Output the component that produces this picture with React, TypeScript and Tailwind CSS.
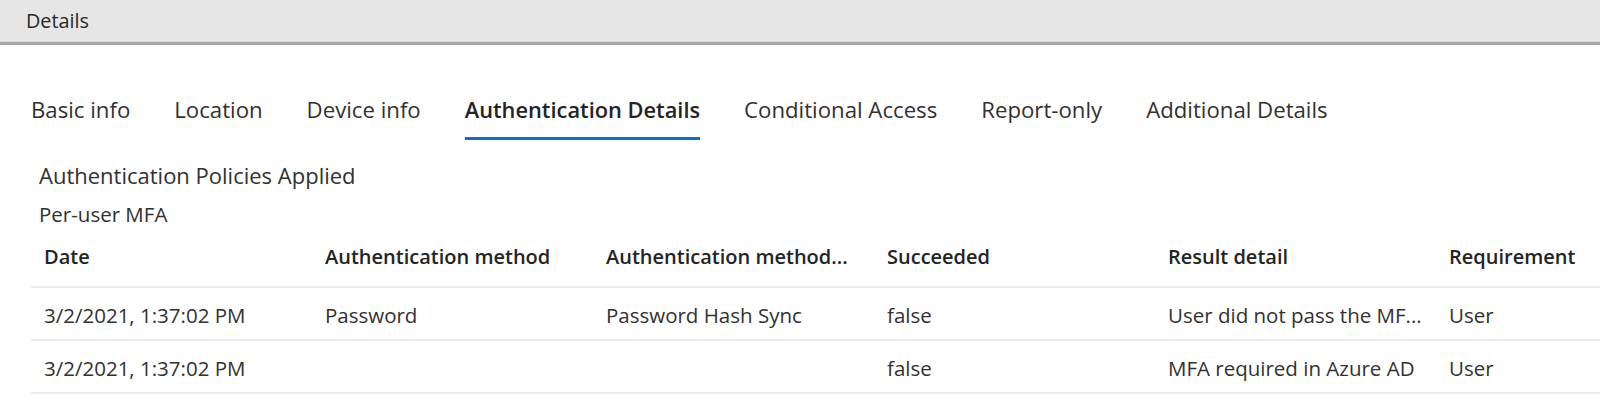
const tabs = [
  "Basic info",
  "Location",
  "Device info",
  "Authentication Details",
  "Conditional Access",
  "Report-only",
  "Additional Details",
];

const columns = [
  "Date",
  "Authentication method",
  "Authentication method...",
  "Succeeded",
  "Result detail",
  "Requirement",
];

const rows = [
  [
    "3/2/2021, 1:37:02 PM",
    "Password",
    "Password Hash Sync",
    "false",
    "User did not pass the MF...",
    "User",
  ],
  ["3/2/2021, 1:37:02 PM", "", "", "false", "MFA required in Azure AD", "User"],
];

const font = { fontFamily: '"Open Sans", "Noto Sans", sans-serif' };

export default function App() {
  return (
    <div className="h-[409px] w-[1600px] overflow-hidden bg-white text-[#323130]" style={font}>
      <div className="flex h-[41px] items-center bg-[#e6e6e6] pl-[26px] text-[19.8px] text-[#262626]">
        Details
      </div>
      <div className="h-px bg-[#d9d9d9]" />
      <div className="h-[3px] bg-[#a6a6a6]" />

      <div className="mt-[50px] flex gap-[44px] pl-[31px]">
        {tabs.map((tab) => {
          const active = tab === "Authentication Details";
          return (
            <div key={tab} className="flex flex-col">
              <span
                className={
                  active
                    ? "h-[30px] text-[21.8px] font-semibold leading-[30px] text-[#242424]"
                    : "h-[30px] text-[22.2px] leading-[30px] text-[#323130]"
                }
              >
                {tab}
              </span>
              <div className={active ? "mt-[12px] h-[3px] bg-[#0f6cd6]" : "mt-[12px] h-[3px]"} />
            </div>
          );
        })}
      </div>

      <div className="ml-[39px] mt-[20px] h-[30px] text-[22px] leading-[30px]">
        Authentication Policies Applied
      </div>
      <div className="ml-[39px] mt-[11px] h-[26px] text-[20.5px] leading-[26px]">Per-user MFA</div>

      <div className="ml-[31px] mt-[4px]">
        <div className="grid h-[57px] grid-cols-[281px_281px_281px_281px_281px_1fr] items-center border-b-2 border-[#ececec] pb-[4px] text-[20px] font-semibold text-[#242424]">
          {columns.map((c) => (
            <div key={c} className="overflow-hidden whitespace-nowrap px-[13px]">
              {c}
            </div>
          ))}
        </div>
        {rows.map((r, i) => (
          <div
            key={i}
            className="grid h-[53px] grid-cols-[281px_281px_281px_281px_281px_1fr] items-center border-b-2 border-[#ececec] pt-[3px] text-[20.5px]"
          >
            {r.map((cell, j) => (
              <div key={j} className="overflow-hidden whitespace-nowrap px-[13px]">
                {cell}
              </div>
            ))}
          </div>
        ))}
      </div>
    </div>
  );
}
